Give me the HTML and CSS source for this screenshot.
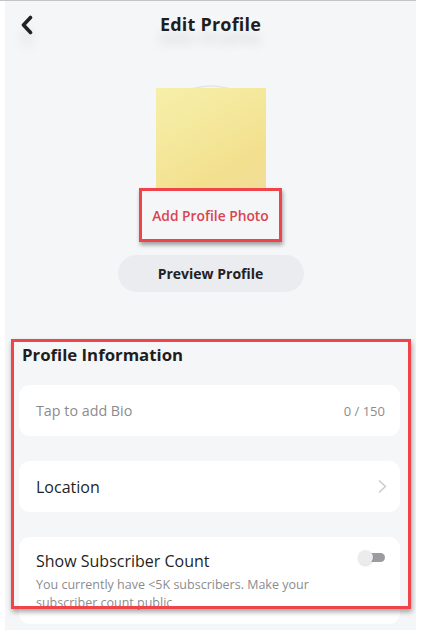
FILE: index.html
```html
<!DOCTYPE html>
<html lang="en">
<head>
<meta charset="utf-8">
<title>Edit Profile</title>
<link rel="stylesheet" href="styles.css">
</head>
<body>
<div class="page">
  <header class="topbar">
    <div class="back">
      <svg width="14" height="20" viewBox="0 0 14 20"><path d="M10.5 2.5 L3.5 10 L10.5 17.5" fill="none" stroke="#222" stroke-width="3.6" stroke-linecap="round" stroke-linejoin="round"/></svg>
    </div>
    <h1 class="title">Edit Profile</h1>
    <div></div>
  </header>

  <section class="avatar-area">
    <div class="avatar">
      <svg class="ring" width="70" height="12" viewBox="0 0 70 12"><path d="M4 11 Q35 -5 66 11" fill="none" stroke="#e3e4ea" stroke-width="1.6"/></svg>
      <div class="photo"></div>
    </div>
    <div class="add-photo"><span>Add Profile Photo</span></div>
    <button class="preview">Preview Profile</button>
  </section>

  <section class="info">
    <h2 class="info-title">Profile Information</h2>
    <div class="card bio">
      <span class="hint">Tap to add Bio</span>
      <span class="count">0 / 150</span>
    </div>
    <div class="card location">
      <span class="label">Location</span>
      <svg width="9" height="13" viewBox="0 0 9 13"><path d="M1.5 1 L7.5 6.5 L1.5 12" fill="none" stroke="#c9cacd" stroke-width="1.5" stroke-linecap="round" stroke-linejoin="round"/></svg>
    </div>
    <div class="card subs">
      <div class="subs-text">
        <div class="label">Show Subscriber Count</div>
        <p class="desc">You currently have &lt;5K subscribers. Make your subscriber count public</p>
      </div>
      <div class="toggle"><span class="track"></span><span class="knob"></span></div>
    </div>
    <div class="highlight"></div>
  </section>
</div>
</body>
</html>
```

FILE: styles.css
```css
* { box-sizing: border-box; }
html, body { margin: 0; padding: 0; background: #ffffff; }
body {
  font-family: "Open Sans", "Lato", sans-serif;
  color: #222;
  border-top: 1px solid #c4c4c6;
  width: 416px;
}
.page {
  margin: 0 0 0 5px;
  width: 411px;
  height: 629px;
  background: #f5f6f8;
  overflow: hidden;
}
.topbar {
  display: grid;
  grid-template-columns: 1fr auto 1fr;
  align-items: center;
  height: 46px;
}
.back {
  padding-left: 15px;
  padding-top: 2px;
  display: flex;
  filter: drop-shadow(0 12px 6px rgba(0,0,0,0.10));
}
.title {
  margin: 0;
  font-size: 18px;
  font-weight: 700;
  line-height: 22px;
  letter-spacing: 0.2px;
  color: #1e1e1e;
  text-shadow: 0 14px 12px rgba(0,0,0,0.12);
}
.avatar-area {
  display: flex;
  flex-direction: column;
  align-items: center;
  padding-top: 36px;
}
.avatar {
  position: relative;
  width: 110px;
  padding-top: 5px;
  display: flex;
  flex-direction: column;
  align-items: center;
}
.ring {
  position: absolute;
  top: 0;
  left: 20px;
}
.photo {
  position: relative;
  width: 110px;
  height: 100px;
  background: linear-gradient(150deg, #f6efaa 0%, #f4e79a 45%, #f3e08e 75%, #f1dd98 100%);
}
.add-photo {
  width: 143px;
  height: 54px;
  border: 3px solid #f0434a;
  box-shadow: 1px 3px 4px rgba(0,0,0,0.35);
  display: flex;
  align-items: center;
  justify-content: center;
}
.add-photo span {
  color: #d9444f;
  font-size: 13.8px;
  font-weight: 600;
  padding-top: 1px;
}
.preview {
  margin-top: 13px;
  width: 186px;
  height: 37px;
  border: none;
  border-radius: 19px;
  background: #eaecf0;
  font-family: inherit;
  font-size: 14px;
  font-weight: 700;
  color: #222;
}
.info {
  position: relative;
  margin-top: 47px;
}
.info-title {
  margin: 0 0 0 17px;
  padding-top: 5px;
  font-size: 16.8px;
  font-weight: 700;
  line-height: 22px;
  color: #1e1e1e;
}
.card {
  margin: 19px 16px 0 14px;
  background: #ffffff;
  border-radius: 11px;
}
.bio, .location {
  height: 51px;
  display: flex;
  align-items: center;
  justify-content: space-between;
  padding: 0 15px 0 17px;
}
.hint { font-size: 14.3px; color: #8b8c90; }
.count { font-size: 13px; color: #8b8c90; }
.location {
  margin-top: 25px;
  padding-right: 13px;
}
.label {
  font-size: 16px;
  font-weight: 500;
  color: #1f1f1f;
}
.subs {
  margin-top: 25px;
  display: flex;
  justify-content: space-between;
  align-items: flex-start;
  padding: 14px 15px 12px 17px;
}
.subs-text { width: 290px; }
.subs .label { line-height: 20px; }
.desc {
  margin: 5px 0 0;
  font-size: 12.5px;
  line-height: 18px;
  color: #8b8c90;
}
.toggle {
  position: relative;
  width: 27px;
  height: 15px;
  margin-top: -1px;
}
.track {
  position: absolute;
  left: 5px;
  top: 3px;
  width: 22px;
  height: 9px;
  border-radius: 5px;
  background: #9c9ca0;
}
.knob {
  position: absolute;
  left: 0;
  top: 0;
  width: 15px;
  height: 15px;
  border-radius: 50%;
  background: #ececee;
  box-shadow: 0 1px 2px rgba(0,0,0,0.15);
}
.highlight {
  position: absolute;
  left: 6px;
  top: 0;
  width: 400px;
  height: 270px;
  border: 3px solid #f0434a;
  box-shadow: 1px 3px 5px rgba(0,0,0,0.35);
}
```
